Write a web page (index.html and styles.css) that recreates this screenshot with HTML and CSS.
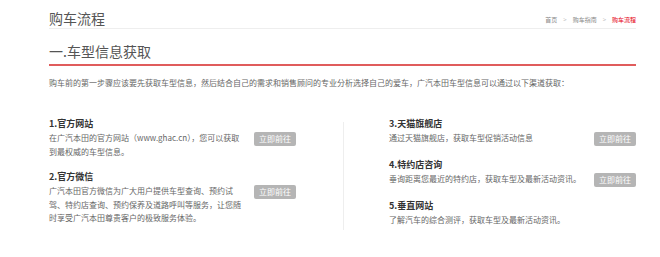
FILE: index.html
```html
<!DOCTYPE html>
<html lang="zh-CN">
<head>
    <meta charset="UTF-8">
    <meta name="viewport" content="width=device-width, initial-scale=1.0">
    <title>购车流程</title>
    <link rel="stylesheet" href="styles.css">
</head>
<body>
    <div class="page">
        <div class="page-head">
            <h1 class="page-title">购车流程</h1>
            <div class="crumbs">
                <span>首页</span>
                <span class="sep">&gt;</span>
                <span>购车指南</span>
                <span class="sep">&gt;</span>
                <span class="current">购车流程</span>
            </div>
        </div>

        <h2 class="step-title">一.车型信息获取</h2>
        <p class="intro">购车前的第一步骤应该要先获取车型信息，然后结合自己的需求和销售顾问的专业分析选择自己的爱车，广汽本田车型信息可以通过以下渠道获取：</p>

        <div class="channels">
            <div class="col col-left">
                <div class="item">
                    <h3 class="item-title">1.官方网站</h3>
                    <p class="item-text">在广汽本田的官方网站（www.ghac.cn），您可以获取到最权威的车型信息。</p>
                    <a class="btn" href="#">立即前往</a>
                </div>
                <div class="item">
                    <h3 class="item-title">2.官方微信</h3>
                    <p class="item-text">广汽本田官方微信为广大用户提供车型查询、预约试驾、特约店查询、预约保养及道路呼叫等服务，让您随时享受广汽本田尊贵客户的极致服务体验。</p>
                    <a class="btn" href="#">立即前往</a>
                </div>
            </div>

            <div class="divider"></div>

            <div class="col col-right">
                <div class="item">
                    <h3 class="item-title">3.天猫旗舰店</h3>
                    <p class="item-text">通过天猫旗舰店，获取车型促销活动信息</p>
                    <a class="btn" href="#">立即前往</a>
                </div>
                <div class="item">
                    <h3 class="item-title">4.特约店咨询</h3>
                    <p class="item-text">垂询距离您最近的特约店，获取车型及最新活动资讯。</p>
                    <a class="btn" href="#">立即前往</a>
                </div>
                <div class="item">
                    <h3 class="item-title">5.垂直网站</h3>
                    <p class="item-text">了解汽车的综合测评，获取车型及最新活动资讯。</p>
                </div>
            </div>
        </div>
    </div>
</body>
</html>
```

FILE: styles.css
```css
body {
    margin: 0;
    background-color: #ffffff;
    font-family: "Noto Sans CJK SC", "Noto Sans", sans-serif;
    color: #666666;
}

.page {
    width: 587px;
    margin-left: 49px;
}

/* top header */
.page-head {
    display: flex;
    justify-content: space-between;
    align-items: flex-end;
    padding-top: 6px;
    border-bottom: 1px solid #eeeeee;
    height: 22px;
}

.page-title {
    margin: 0;
    font-size: 14px;
    line-height: 20px;
    font-weight: normal;
    color: #555555;
}

.crumbs {
    display: flex;
    gap: 6px;
    font-size: 6px;
    line-height: 8px;
    color: #888888;
    padding-bottom: 4px;
}

.crumbs .sep {
    color: #bbbbbb;
}

.crumbs .current {
    color: #e60012;
}

/* section title */
.step-title {
    margin: 0;
    padding-top: 10px;
    font-size: 14px;
    line-height: 25px;
    font-weight: normal;
    color: #555555;
    border-bottom: 2px solid #e05c5c;
}

.intro {
    margin: 10px 0 0;
    font-size: 8px;
    line-height: 14px;
    color: #666666;
}

/* channel list */
.channels {
    display: flex;
    margin-top: 27px;
}

.col {
    display: flex;
    flex-direction: column;
    gap: 12px;
}

.col-left {
    width: 247px;
    margin-right: 47px;
}

.col-right {
    flex: 1;
    padding-left: 45px;
}

.divider {
    width: 1px;
    margin-top: 5px;
    height: 108px;
    background-color: #eeeeee;
}

.item {
    display: grid;
    grid-template-columns: 192px 1fr;
    column-gap: 10px;
    align-items: start;
}

.item-title {
    grid-column: 1 / 3;
    margin: 0;
    font-size: 9px;
    line-height: 14px;
    font-weight: bold;
    color: #333333;
}

.item-text {
    margin: 0;
    font-size: 8px;
    line-height: 13.5px;
    color: #666666;
}

.col-right .item {
    grid-template-columns: 1fr auto;
}

.btn {
    justify-self: end;
    margin-top: 1px;
    width: 42px;
    height: 14px;
    line-height: 14px;
    text-align: center;
    font-size: 8px;
    color: #ffffff;
    background-color: #b5b5b5;
    border-radius: 2px;
    text-decoration: none;
}
```
